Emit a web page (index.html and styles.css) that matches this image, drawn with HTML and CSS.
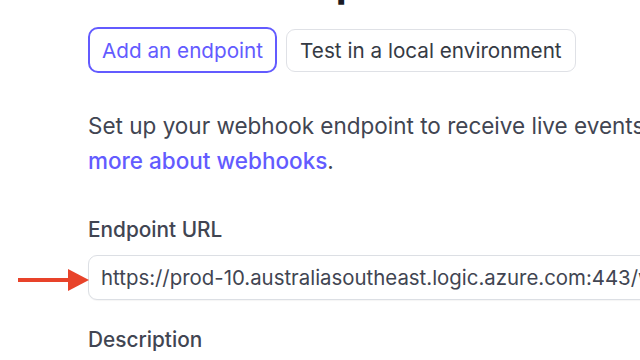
FILE: index.html
```html
<!DOCTYPE html>
<html lang="en">
<head>
    <meta charset="UTF-8">
    <meta name="viewport" content="width=device-width, initial-scale=1.0">
    <title>Add an endpoint</title>
    <link rel="stylesheet" href="styles.css">
</head>
<body>
    <div class="page">
        <h1 class="title">Listen to Stripe events</h1>

        <div class="tabs">
            <button class="tab active">Add an endpoint</button>
            <button class="tab">Test in a local environment</button>
        </div>

        <p class="intro">
            Set up your webhook endpoint to receive live events from Stripe or learn<br>
            <a href="#">more about webhooks</a>.
        </p>

        <div class="field">
            <label class="field-label" for="url">Endpoint URL</label>
            <div class="input-wrap">
                <svg class="arrow" width="72" height="24" viewBox="0 0 72 24">
                    <line x1="0" y1="12" x2="54" y2="12" stroke="#e8432a" stroke-width="4"/>
                    <polygon points="50,1 71,12 50,23" fill="#e8432a"/>
                </svg>
                <input type="text" id="url" class="text-input" value="https://prod-10.australiasoutheast.logic.azure.com:443/workflows/8c1f3e5a2b9d4e7f/triggers/manual/paths/invoke">
            </div>
        </div>

        <div class="field">
            <label class="field-label" for="desc">Description</label>
        </div>
    </div>
</body>
</html>
```

FILE: styles.css
```css
html, body {
    margin: 0;
    padding: 0;
    background: #fff;
    overflow: hidden;
}
body {
    font-family: Inter, "Noto Sans", sans-serif;
    color: #414552;
}
.page {
    padding-left: 88px;
    width: 900px;
}
.title {
    font-size: 40px;
    line-height: 40px;
    font-weight: 700;
    color: #1a1b25;
    margin: -37px 0 0 3px;
    white-space: nowrap;
}
.tabs {
    display: flex;
    align-items: center;
    gap: 9px;
    margin-top: 24px;
}
.tab {
    font-family: inherit;
    font-size: 20.7px;
    line-height: 25px;
    padding: 8px 13px;
    background: #fff;
    color: #353a44;
    border: 1px solid #dfe1e6;
    border-radius: 9px;
    cursor: pointer;
}
.tab.active {
    color: #635bff;
    border: 2px solid #635bff;
    padding: 8.5px 12px;
    border-radius: 10px;
}
.intro {
    font-size: 22.5px;
    line-height: 35px;
    margin: 35px 0 0 0;
    white-space: nowrap;
}
.intro a {
    color: #635bff;
    font-weight: 500;
    text-decoration: none;
}
.field {
    margin-top: 40px;
}
.field + .field {
    margin-top: 28px;
}
.field-label {
    display: block;
    font-size: 20.8px;
    line-height: 24px;
    font-weight: 500;
    color: #414552;
}
.input-wrap {
    position: relative;
    margin-top: 13px;
}
.text-input {
    box-sizing: border-box;
    width: 720px;
    height: 45px;
    padding: 0 12px;
    font-family: inherit;
    font-size: 20.4px;
    color: #414552;
    border: 1px solid #dcdfe4;
    border-radius: 9px;
    outline: none;
    box-shadow: 0 1px 1px rgba(0, 0, 0, 0.04);
}
.arrow {
    position: absolute;
    left: -70px;
    top: 13px;
}
```
